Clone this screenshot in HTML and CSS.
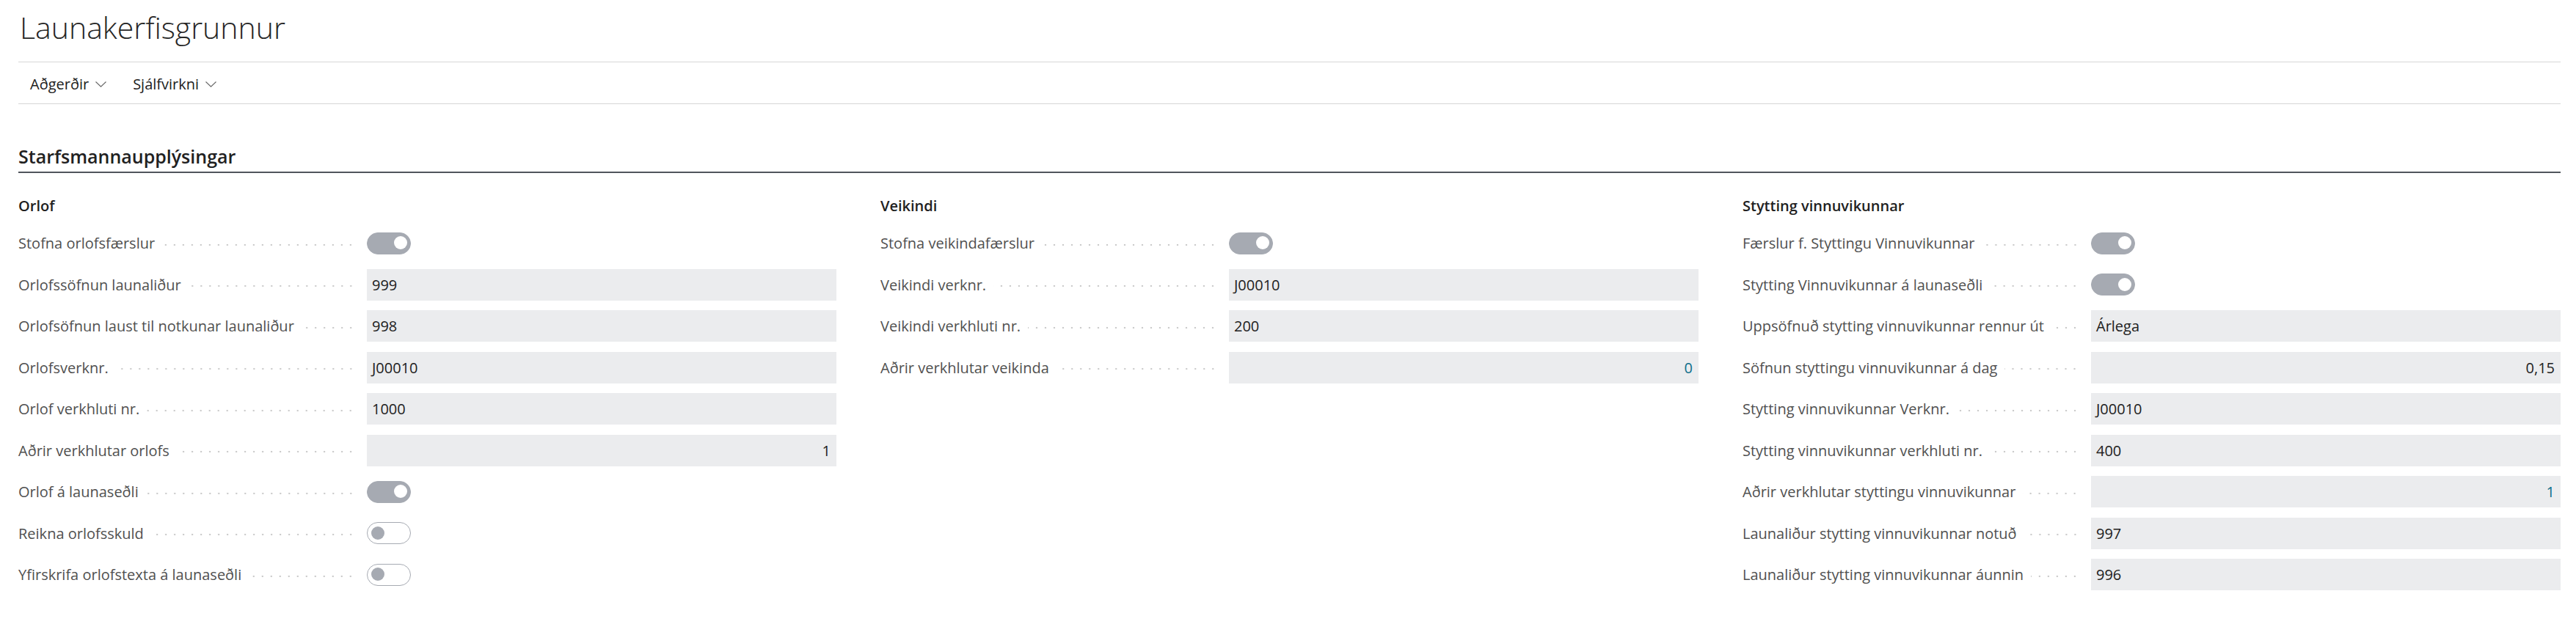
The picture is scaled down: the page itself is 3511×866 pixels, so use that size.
FILE: index.html
```html
<!DOCTYPE html>
<html lang="is">
<head>
  <meta charset="UTF-8" />
  <title>Launakerfisgrunnur</title>
  <link rel="stylesheet" href="styles.css">
</head>
<body>
  <div class="page">
    <div class="title-bar">
      <h1 class="title">Launakerfisgrunnur</h1>
    </div>

    <div class="action-bar">
      <button class="action">Aðgerðir
        <svg class="chevron" width="15" height="8" viewBox="0 0 15 8"><polyline points="0.5,0.5 7.5,7.2 14.5,0.5" /></svg>
      </button>
      <button class="action">Sjálfvirkni
        <svg class="chevron" width="15" height="8" viewBox="0 0 15 8"><polyline points="0.5,0.5 7.5,7.2 14.5,0.5" /></svg>
      </button>
    </div>

    <h2 class="section-head">Starfsmannaupplýsingar</h2>

    <div class="groups">
      <!-- Orlof -->
      <div class="group">
        <h3 class="group-head">Orlof</h3>
        <div class="field">
          <span class="label"><span>Stofna orlofsfærslur</span><i class="leader"></i></span>
          <span class="value"><span class="toggle on"></span></span>
        </div>
        <div class="field">
          <span class="label"><span>Orlofssöfnun launaliður</span><i class="leader"></i></span>
          <span class="value"><span class="box">999</span></span>
        </div>
        <div class="field">
          <span class="label"><span>Orlofsöfnun laust til notkunar launaliður</span><i class="leader"></i></span>
          <span class="value"><span class="box">998</span></span>
        </div>
        <div class="field">
          <span class="label"><span>Orlofsverknr.</span><i class="leader"></i></span>
          <span class="value"><span class="box">J00010</span></span>
        </div>
        <div class="field">
          <span class="label"><span>Orlof verkhluti nr.</span><i class="leader"></i></span>
          <span class="value"><span class="box">1000</span></span>
        </div>
        <div class="field">
          <span class="label"><span>Aðrir verkhlutar orlofs</span><i class="leader"></i></span>
          <span class="value"><span class="box num">1</span></span>
        </div>
        <div class="field">
          <span class="label"><span>Orlof á launaseðli</span><i class="leader"></i></span>
          <span class="value"><span class="toggle on"></span></span>
        </div>
        <div class="field">
          <span class="label"><span>Reikna orlofsskuld</span><i class="leader"></i></span>
          <span class="value"><span class="toggle"></span></span>
        </div>
        <div class="field">
          <span class="label"><span>Yfirskrifa orlofstexta á launaseðli</span><i class="leader"></i></span>
          <span class="value"><span class="toggle"></span></span>
        </div>
      </div>

      <!-- Veikindi -->
      <div class="group">
        <h3 class="group-head">Veikindi</h3>
        <div class="field">
          <span class="label"><span>Stofna veikindafærslur</span><i class="leader"></i></span>
          <span class="value"><span class="toggle on"></span></span>
        </div>
        <div class="field">
          <span class="label"><span>Veikindi verknr.</span><i class="leader"></i></span>
          <span class="value"><span class="box">J00010</span></span>
        </div>
        <div class="field">
          <span class="label"><span>Veikindi verkhluti nr.</span><i class="leader"></i></span>
          <span class="value"><span class="box">200</span></span>
        </div>
        <div class="field">
          <span class="label"><span>Aðrir verkhlutar veikinda</span><i class="leader"></i></span>
          <span class="value"><span class="box num link">0</span></span>
        </div>
      </div>

      <!-- Stytting vinnuvikunnar -->
      <div class="group">
        <h3 class="group-head">Stytting vinnuvikunnar</h3>
        <div class="field">
          <span class="label"><span>Færslur f. Styttingu Vinnuvikunnar</span><i class="leader"></i></span>
          <span class="value"><span class="toggle on"></span></span>
        </div>
        <div class="field">
          <span class="label"><span>Stytting Vinnuvikunnar á launaseðli</span><i class="leader"></i></span>
          <span class="value"><span class="toggle on"></span></span>
        </div>
        <div class="field">
          <span class="label"><span>Uppsöfnuð stytting vinnuvikunnar rennur út</span><i class="leader"></i></span>
          <span class="value"><span class="box">Árlega</span></span>
        </div>
        <div class="field">
          <span class="label"><span>Söfnun styttingu vinnuvikunnar á dag</span><i class="leader"></i></span>
          <span class="value"><span class="box num">0,15</span></span>
        </div>
        <div class="field">
          <span class="label"><span>Stytting vinnuvikunnar Verknr.</span><i class="leader"></i></span>
          <span class="value"><span class="box">J00010</span></span>
        </div>
        <div class="field">
          <span class="label"><span>Stytting vinnuvikunnar verkhluti nr.</span><i class="leader"></i></span>
          <span class="value"><span class="box">400</span></span>
        </div>
        <div class="field">
          <span class="label"><span>Aðrir verkhlutar styttingu vinnuvikunnar</span><i class="leader"></i></span>
          <span class="value"><span class="box num link">1</span></span>
        </div>
        <div class="field">
          <span class="label"><span>Launaliður stytting vinnuvikunnar notuð</span><i class="leader"></i></span>
          <span class="value"><span class="box">997</span></span>
        </div>
        <div class="field">
          <span class="label"><span>Launaliður stytting vinnuvikunnar áunnin</span><i class="leader"></i></span>
          <span class="value"><span class="box">996</span></span>
        </div>
      </div>
    </div>
  </div>
</body>
</html>
```

FILE: styles.css
```css
body {
  margin: 0;
  background: #fff;
  font-family: 'Segoe UI', 'Open Sans', 'Noto Sans', sans-serif;
  color: #212121;
}
.page {
  padding: 0 21px 40px 25px;
}
.title-bar {
  padding-top: 11px;
  height: 73px;
  border-bottom: 1px solid #d6d6d6;
}
.title {
  margin: 0 0 0 2px;
  font-size: 41px;
  font-weight: 300;
  line-height: 52px;
  color: #262626;
}
.action-bar {
  display: flex;
  align-items: center;
  gap: 36px;
  height: 57px;
  padding: 3px 0 0 16px;
  box-sizing: border-box;
  border-bottom: 1px solid #d6d6d6;
}
.action {
  display: flex;
  align-items: center;
  gap: 9px;
  padding: 0;
  border: none;
  background: none;
  font-family: inherit;
  font-size: 20px;
  color: #212121;
  cursor: pointer;
}
.chevron polyline {
  fill: none;
  stroke: #666;
  stroke-width: 1.1;
}
.section-head {
  margin: 54px 0 0;
  padding-bottom: 4px;
  font-size: 25px;
  font-weight: 600;
  line-height: 34px;
  color: #212121;
  border-bottom: 2px solid #50555c;
}
.groups {
  display: grid;
  grid-template-columns: repeat(3, 1fr);
  column-gap: 60px;
  margin-top: 30px;
}
.group-head {
  margin: 0 0 14px;
  font-size: 20px;
  font-weight: 600;
  line-height: 30px;
  color: #212121;
}
.field {
  display: grid;
  grid-template-columns: 459px 1fr;
  column-gap: 16px;
  height: 43px;
  margin-bottom: 13.5px;
}
.label {
  display: flex;
  align-items: center;
  font-size: 20px;
  color: #505050;
  white-space: nowrap;
}
.leader {
  flex: 1;
  align-self: stretch;
  margin-left: 10px;
  background: radial-gradient(circle, #cacaca 1.1px, transparent 1.6px) right 56% / 12px 6px repeat-x;
}
.value {
  display: flex;
  align-items: center;
}
.box {
  flex: 1;
  height: 43px;
  line-height: 43px;
  padding: 0 8px 0 7px;
  background: #ebecee;
  font-size: 20px;
  color: #212121;
}
.num {
  text-align: right;
}
.link {
  color: #0e6f8c;
}
.toggle {
  position: relative;
  width: 60px;
  height: 30px;
  box-sizing: border-box;
  border: 1.5px solid #a6aab2;
  border-radius: 15px;
  background: #fff;
}
.toggle::after {
  content: "";
  position: absolute;
  top: 4.5px;
  left: 4.5px;
  width: 18px;
  height: 18px;
  border-radius: 50%;
  background: #a6aab2;
}
.toggle.on {
  background: #a6aab2;
}
.toggle.on::after {
  left: auto;
  right: 4.5px;
  background: #fff;
}
```
